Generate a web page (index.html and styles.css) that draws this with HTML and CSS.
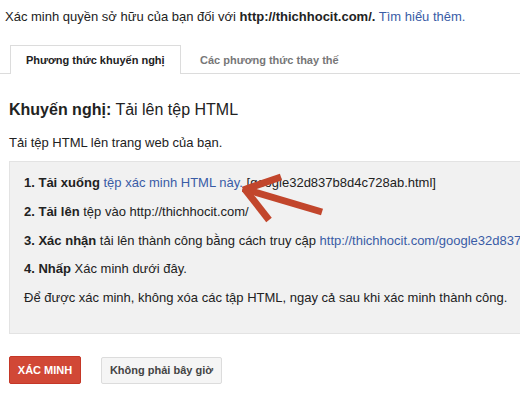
FILE: index.html
```html
<!DOCTYPE html>
<html lang="vi">
<head>
<meta charset="utf-8">
<link rel="stylesheet" href="styles.css">
</head>
<body>
<p class="intro">Xác minh quyền sở hữu của bạn đối với <b>http://thichhocit.com/.</b> <a class="link" href="#">Tìm hiểu thêm.</a></p>
<div class="tabs">
  <div class="tab active">Phương thức khuyến nghị</div>
  <div class="tab">Các phương thức thay thế</div>
</div>
<h2 class="heading"><b>Khuyến nghị:</b> Tải lên tệp HTML</h2>
<p class="desc">Tải tệp HTML lên trang web của bạn.</p>
<div class="box">
  <p class="step"><b>1. Tải xuống</b> <a class="link" href="#">tệp xác minh HTML này.</a> [google32d837b8d4c728ab.html]</p>
  <p class="step"><b>2. Tải lên</b> tệp vào http://thichhocit.com/</p>
  <p class="step"><b>3. Xác nhận</b> tải lên thành công bằng cách truy cập <a class="link" href="#">http://thichhocit.com/google32d837b8d4c728ab.html</a></p>
  <p class="step"><b>4. Nhấp</b> Xác minh dưới đây.</p>
  <p class="step">Để được xác minh, không xóa các tập HTML, ngay cả sau khi xác minh thành công.</p>
  <svg class="arrow" width="90" height="56" viewBox="0 0 90 56">
    <g stroke="#c2462c" stroke-width="7" stroke-linecap="butt" fill="none">
      <line x1="4" y1="19.5" x2="80" y2="42"/>
      <line x1="1" y1="20" x2="39" y2="7"/>
      <line x1="2" y1="18" x2="27" y2="50"/>
    </g>
  </svg>
</div>
<div class="actions">
  <button class="btn primary">XÁC MINH</button>
  <button class="btn secondary">Không phải bây giờ</button>
</div>
</body>
</html>
```

FILE: styles.css
```css
html, body {
  margin: 0;
  padding: 0;
  background: #fff;
  overflow: hidden;
}
body {
  width: 520px;
  height: 410px;
  font-family: "Liberation Sans", Arial, sans-serif;
  font-size: 13px;
  color: #222;
}
.link {
  color: #3a5ca6;
  text-decoration: none;
}
.intro {
  margin: 0;
  padding: 8px 5px 0;
  line-height: 18px;
  white-space: nowrap;
}
.tabs {
  display: flex;
  margin-top: 19px;
  padding-left: 10px;
  border-bottom: 1px solid #dcdcdc;
  height: 28px;
}
.tab {
  box-sizing: border-box;
  height: 29px;
  margin-bottom: -1px;
  padding: 0 14px 0 15px;
  line-height: 28px;
  font-size: 11px;
  font-weight: bold;
  color: #777;
  border: 1px solid transparent;
  border-bottom: 0;
  white-space: nowrap;
}
.tab.active {
  color: #222;
  background: #fff;
  border-color: #dcdcdc;
  width: 171px;
}
.tab + .tab {
  padding-left: 18px;
}
.heading {
  margin: 26px 0 0 9px;
  font-size: 16px;
  font-weight: normal;
  line-height: 20px;
  white-space: nowrap;
}
.desc {
  margin: 14px 0 0 9px;
  line-height: 18px;
}
.box {
  position: relative;
  margin: 9px 0 0 9px;
  width: 560px;
  box-sizing: border-box;
  background: #f1f1f1;
  border: 1px solid #e3e3e3;
  padding: 7px 0 20px 14px;
}
.step {
  margin: 0;
  line-height: 28.75px;
  white-space: nowrap;
}
.arrow {
  position: absolute;
  left: 232px;
  top: 8px;
}
.actions {
  display: flex;
  gap: 20px;
  margin: 22px 0 0 9px;
  align-items: flex-start;
}
.btn {
  font-family: "Liberation Sans", Arial, sans-serif;
  font-size: 11px;
  font-weight: bold;
  height: 28px;
  border-radius: 2px;
  padding: 0;
  cursor: pointer;
}
.primary {
  width: 72px;
  background: #d14836;
  border: 1px solid #c53727;
  color: #fff;
}
.secondary {
  width: 121px;
  margin-top: 1px;
  height: 27px;
  background: #f5f5f5;
  border: 1px solid #dcdcdc;
  color: #444;
}
```
